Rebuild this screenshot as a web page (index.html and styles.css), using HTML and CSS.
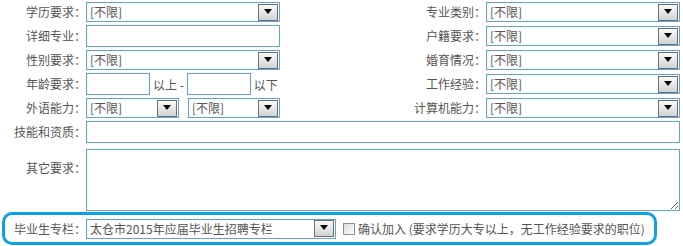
FILE: index.html
```html
<!DOCTYPE html>
<html lang="zh-CN">
<head>
    <meta charset="UTF-8">
    <title>职位要求</title>
    <link rel="stylesheet" href="styles.css">
</head>
<body>
    <div class="form">
        <label class="label">学历要求：</label>
        <div class="select"><span class="value">[不限]</span><span class="arrow"></span></div>
        <label class="label">专业类别：</label>
        <div class="select"><span class="value">[不限]</span><span class="arrow"></span></div>

        <label class="label">详细专业：</label>
        <input type="text" class="text">
        <label class="label">户籍要求：</label>
        <div class="select"><span class="value">[不限]</span><span class="arrow"></span></div>

        <label class="label">性别要求：</label>
        <div class="select"><span class="value">[不限]</span><span class="arrow"></span></div>
        <label class="label">婚育情况：</label>
        <div class="select"><span class="value">[不限]</span><span class="arrow"></span></div>

        <label class="label">年龄要求：</label>
        <div class="range">
            <input type="text" class="text age">
            <span>以上 -</span>
            <input type="text" class="text age">
            <span>以下</span>
        </div>
        <label class="label">工作经验：</label>
        <div class="select"><span class="value">[不限]</span><span class="arrow"></span></div>

        <label class="label">外语能力：</label>
        <div class="pair">
            <div class="select lang"><span class="value">[不限]</span><span class="arrow"></span></div>
            <div class="select lang2"><span class="value">[不限]</span><span class="arrow"></span></div>
        </div>
        <label class="label">计算机能力：</label>
        <div class="select"><span class="value">[不限]</span><span class="arrow"></span></div>

        <label class="label">技能和资质：</label>
        <input type="text" class="text wide">

        <label class="label top">其它要求：</label>
        <textarea class="area"></textarea>
    </div>

    <div class="special">
        <label class="special-label">毕业生专栏：</label>
        <div class="select grad"><span class="value">太仓市2015年应届毕业生招聘专栏</span><span class="arrow"></span></div>
        <span class="check"></span>
        <span class="check-text">确认加入 (要求学历大专以上，无工作经验要求的职位)</span>
    </div>
</body>
</html>
```

FILE: styles.css
```css
* {
    margin: 0;
    padding: 0;
    box-sizing: border-box;
}

body {
    font-family: "Noto Sans CJK SC", "Liberation Sans", sans-serif;
    font-size: 12px;
    color: #555;
    background: #fff;
    width: 683px;
    height: 246px;
    overflow: hidden;
}

.form {
    display: grid;
    grid-template-columns: 86px 194px 206px 194px;
    grid-template-rows: repeat(6, 24px) 67px;
    align-items: center;
}

.label {
    text-align: right;
    white-space: nowrap;
    line-height: 16px;
}

.label.top {
    align-self: start;
    padding-top: 16px;
}

.select {
    display: flex;
    align-items: center;
    height: 20px;
    border: 1px solid #5fa3da;
    background: #fff;
    padding: 0 1px 0 3px;
}

.value {
    flex: 1;
    white-space: nowrap;
    overflow: hidden;
    line-height: 16px;
}

.arrow {
    width: 20px;
    height: 17px;
    border: 1px solid #6e6e6e;
    background: linear-gradient(#fafafa, #d2d2d2);
    display: flex;
    align-items: center;
    justify-content: center;
}

.arrow::after {
    content: "";
    border-left: 4px solid transparent;
    border-right: 4px solid transparent;
    border-top: 5px solid #000;
    margin-top: -2px;
}

.text {
    height: 22px;
    border: 1px solid #5fa3da;
    outline: none;
    font: inherit;
}

.wide {
    grid-column: 2 / 5;
}

.range {
    display: flex;
    align-items: center;
    gap: 3px;
    white-space: nowrap;
}

.age {
    width: 64px;
}

.pair {
    display: flex;
    gap: 9px;
}

.lang {
    width: 93px;
}

.lang2 {
    width: 92px;
}

.area {
    grid-column: 2 / 5;
    align-self: start;
    margin-top: 5px;
    height: 62px;
    border: 1px solid #5fa3da;
    outline: none;
    font: inherit;
}

.special {
    display: flex;
    align-items: center;
    margin: 1px 0 0 2px;
    width: 655px;
    height: 33px;
    border: 3px solid #0ea2e4;
    border-radius: 10px;
}

.special-label {
    width: 81px;
    text-align: right;
    white-space: nowrap;
}

.grad {
    width: 250px;
}

.check {
    width: 12px;
    height: 12px;
    margin-left: 7px;
    border: 1px solid #8e8e8e;
    background: linear-gradient(135deg, #dcdcdc, #ffffff);
}

.check-text {
    margin-left: 3px;
    white-space: nowrap;
}
```
